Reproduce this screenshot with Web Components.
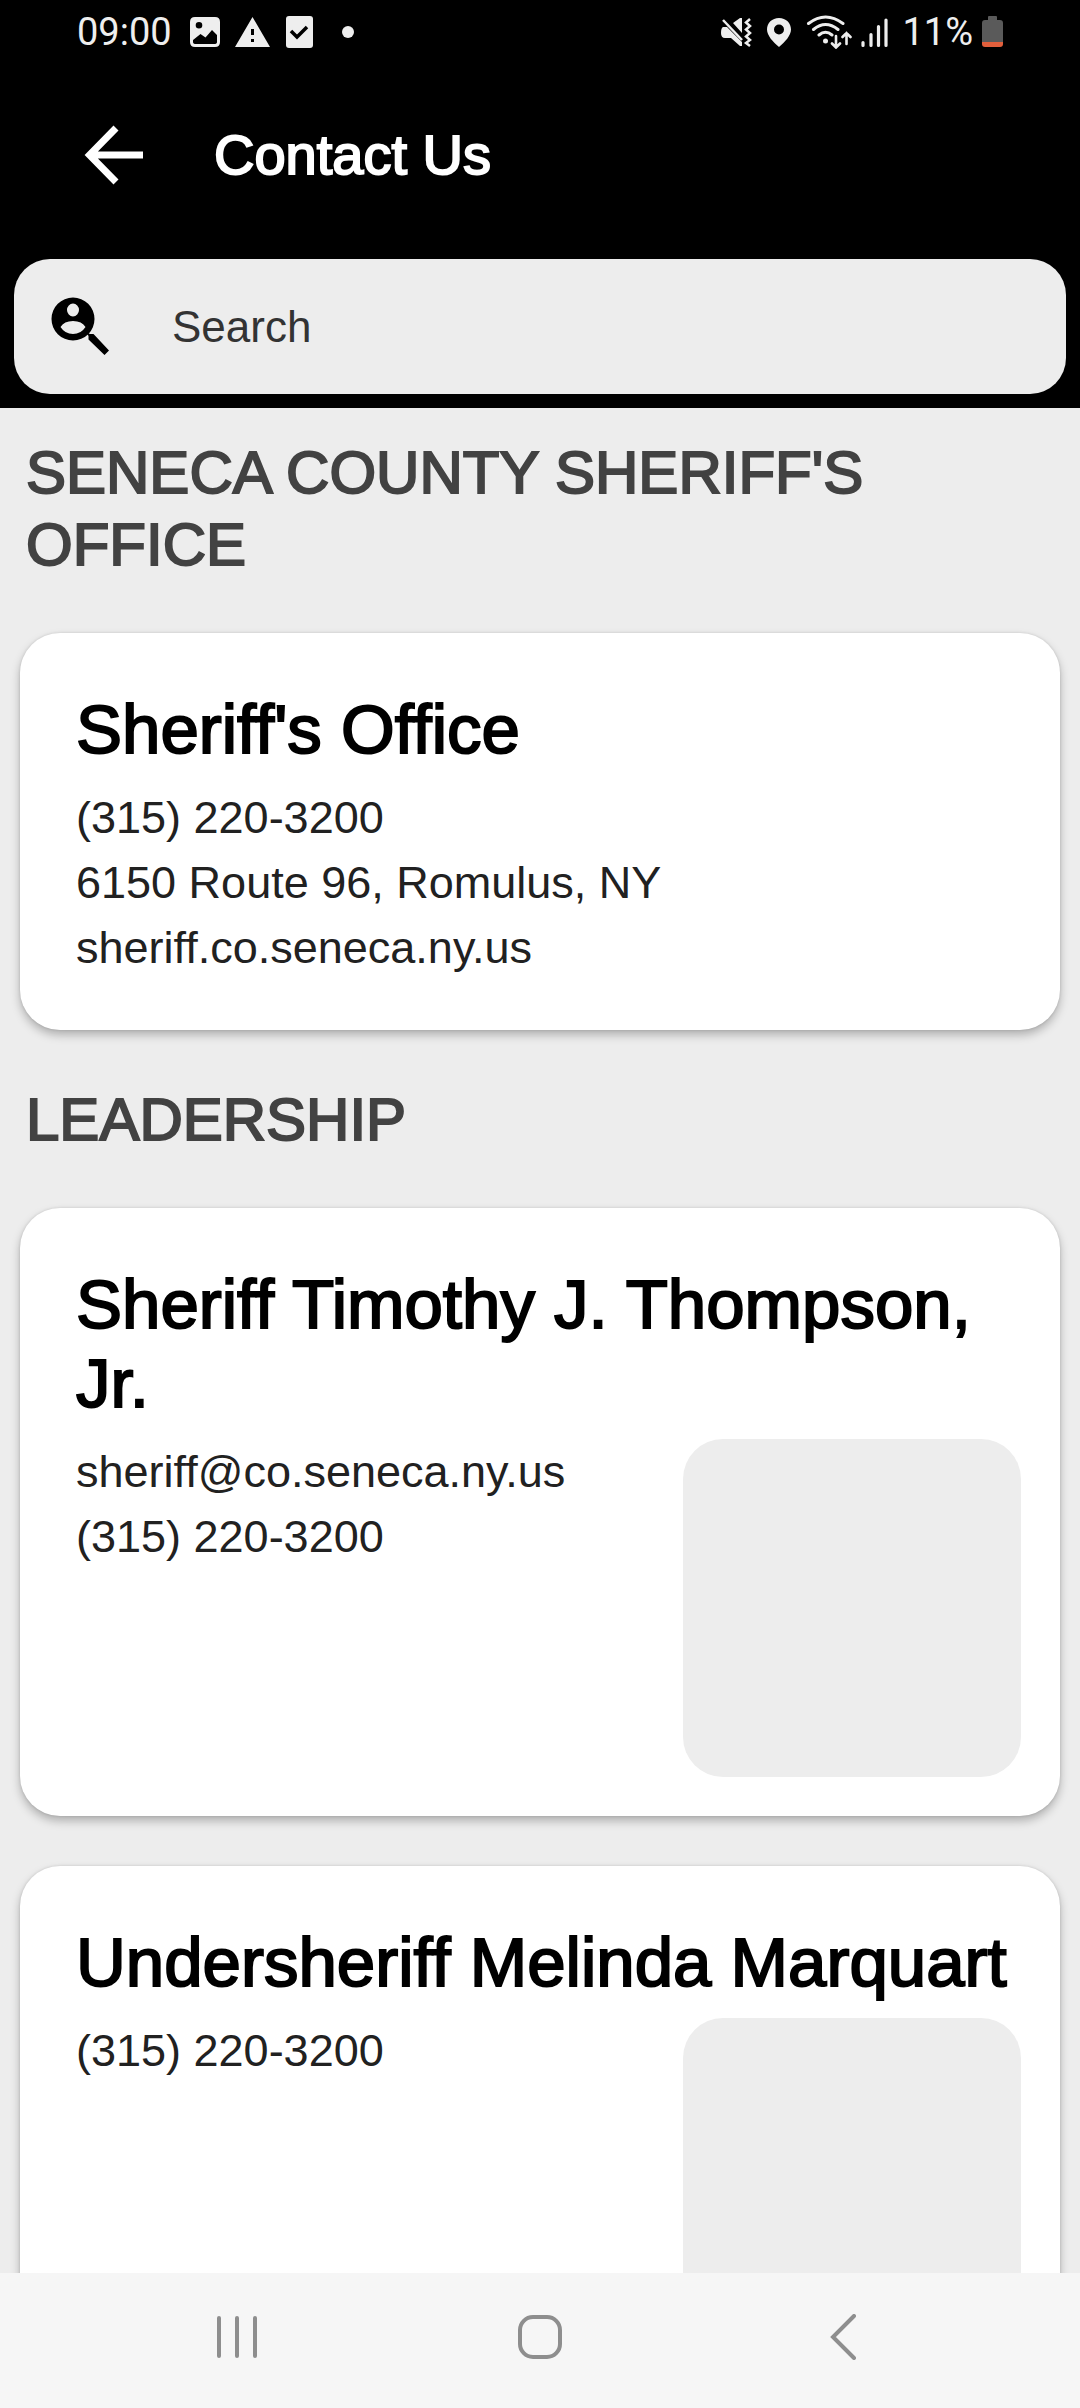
<!DOCTYPE html>
<html lang="en">
<head>
<meta charset="utf-8">
<meta name="viewport" content="width=device-width, initial-scale=1">
<title>Contact Us</title>
<style>
  body { margin: 0; background: #ededed; font-family: "Liberation Sans", Arial, sans-serif; }
</style>
</head>
<body>
<contact-app></contact-app>

<script>
  class BaseElement extends HTMLElement {
    constructor() {
      super();
      this.attachShadow({ mode: "open" }).innerHTML = this.render();
    }
    render() { return ""; }
  }

  /* System status bar: clock, notifications, radios and battery */
  customElements.define("status-bar", class extends BaseElement {
    render() {
      return `
      <style>
        :host { display: flex; justify-content: space-between; align-items: center; height: 64px;
          padding: 0 76px 0 77px; color: #eee; font: 38px Roboto, sans-serif; }
        .left, .right { display: flex; align-items: center; }
        .left { gap: 14px; }
        .right { gap: 8px; }
        svg { display: block; flex: none; fill: currentColor; }
        time { margin-right: 3px; }
      </style>
      <div class="left">
        <time>09:00</time>
        <svg width="32" height="32" viewBox="0 0 32 32"><path fill-rule="evenodd" d="M6 1H26Q31 1 31 6V26Q31 31 26 31H6Q1 31 1 26V6Q1 1 6 1ZM10 6A3.200 3.200 0 1 0 10 12.600A3.200 3.200 0 1 0 10 6ZM4 24V26Q4 28 7 28H25Q28 28 28 26V19L23 14L16.500 21.500L11.500 18Z"/></svg>
        <svg width="35" height="32" viewBox="0 0 35 32"><path fill-rule="evenodd" d="M17.500 1L35 31H0ZM16 13V19H19V13ZM16 23V26H19V23Z"/></svg>
        <svg width="31" height="34" viewBox="0 0 31 34"><rect x="2" y="1" width="27" height="32" rx="3"/><path d="M7 16L13 22L23 12" fill="none" stroke="#000" stroke-width="3.500"/></svg>
        <svg width="25" height="12" viewBox="0 0 25 12"><circle cx="19" cy="6" r="6"/></svg>
      </div>
      <div class="right">
        <svg width="38" height="32" viewBox="0 0 38 32"><path d="M3 11H7L22 26V30H20L11 22H5Q1 22 1 17Q1 12 3 11ZM13 7L20 2H22V17Z"/><path d="M3 4L22 24" stroke="#eee" stroke-width="2.500"/><path d="M30 3L26 6.500L30 10L26 13.500L30 17L26 20.500L30 24L26 27L30 30" fill="none" stroke="#eee" stroke-width="2.500"/></svg>
        <svg width="32" height="32" viewBox="0 0 32 32"><path fill-rule="evenodd" d="M13 2C6 2 1 7 1 13.500C1 19.500 7 26 13 31C19 26 25 19.500 25 13.500C25 7 20 2 13 2ZM13 8.500A5 5 0 1 1 13 18.500A5 5 0 1 1 13 8.500Z"/></svg>
        <svg width="46" height="34" viewBox="0 0 46 34"><g fill="none" stroke="#eee" stroke-width="3" stroke-linecap="round"><path d="M2.500 8.500Q19.500 -4.500 37 8.500M7.500 14.500Q19.500 4.500 32 14.500M13 20Q19.500 14.500 26 20"/><path stroke-width="2.600" d="M30 21V32M26 28.500L30 32.500L34 28.500M40.500 29V18M36.500 22L40.500 18L44.500 22"/></g><circle cx="19.500" cy="26" r="2.500"/></svg>
        <svg width="34" height="32" viewBox="0 0 34 32"><path d="M3 26.500V29.500M11 18.500V29.500M18.500 10.500V29.500M26 4V29.500" stroke="#eee" stroke-width="3.200" stroke-linecap="round"/></svg>
        <span>11%</span>
        <svg width="23" height="32" viewBox="0 0 23 32"><path fill="#5a5a5a" d="M8 0H15Q16 0 16 1V4H19Q22 4 22 7V26H1V7Q1 4 4 4H7V1Q7 0 8 0Z"/><path fill="#e25f3c" d="M1 26H22V28Q22 31 19 31H4Q1 31 1 28Z"/></svg>
      </div>`;
    }
  });

  customElements.define("app-bar", class extends BaseElement {
    render() {
      return `
      <style>
        :host { display: flex; align-items: center; gap: 68px; min-height: 182px; padding: 0 80px; color: #fff; }
        button { display: block; flex: none; padding: 0; border: 0; background: none; color: inherit; }
        svg { display: block; }
        h1 { margin: 0; font-size: 56px; line-height: 64px; font-weight: 400; -webkit-text-stroke: 2px currentColor; }
      </style>
      <button type="button" aria-label="Back">
        <svg width="66" height="60" viewBox="0 0 66 60" fill="none" stroke="currentColor" stroke-width="7"><path d="M63 30H10M36 3L9.500 30L36 57"/></svg>
      </button>
      <h1><slot></slot></h1>`;
    }
  });

  customElements.define("search-field", class extends BaseElement {
    render() {
      return `
      <style>
        :host { display: block; padding: 13px 14px 14px; }
        label { display: flex; align-items: center; gap: 61px; height: 135px; padding: 0 37px; border-radius: 36px; background: #ededed; }
        svg { flex: none; display: block; }
        input { flex: 1; min-width: 0; padding: 0; border: 0; outline: 0; background: none; font: inherit; font-size: 44px; line-height: 52px; color: #333; }
        input::placeholder { color: #333; opacity: 1; }
      </style>
      <label>
        <svg width="60" height="60" viewBox="0 0 60 60"><path fill-rule="evenodd" d="M22 .500A21.500 21.500 0 1 1 22 43.500A21.500 21.500 0 1 1 22 .500ZM22 6.500A6 6.500 0 1 0 22 19.500A6 6.500 0 1 0 22 6.500ZM9.500 30Q14 37 22 37Q30 37 34.500 30Q31 24 22 24Q13 24 9.500 30Z"/><path d="M35 35L39 37H42.500L58 53.500L53.500 58L37.500 42.500V39Z"/></svg>
        <input type="search" placeholder="Search" aria-label="Search contacts">
      </label>`;
    }
  });

  customElements.define("section-title", class extends BaseElement {
    render() {
      return `
      <style>
        :host { display: block; padding: 29px 26px 27px; color: #424242; }
        h2 { margin: 0; font-size: 60px; line-height: 72px; font-weight: 400; text-transform: uppercase; -webkit-text-stroke: 2px currentColor; }
      </style>
      <h2><slot></slot></h2>`;
    }
  });

  customElements.define("contact-card", class extends BaseElement {
    render() {
      return `
      <style>
        :host { display: block; margin: 25px 20px; padding: 57px 39px 39px 56px; border-radius: 40px; background: #fff;
          box-shadow: 0 5px 10px rgba(0,0,0,.26), 0 0 3px rgba(0,0,0,.12); }
        h3 { margin: 0 0 16px; color: #000; font-size: 69px; line-height: 79px; font-weight: 400; -webkit-text-stroke: 2px currentColor; }
        .row { display: flex; justify-content: space-between; align-items: flex-start; }
        .details { display: flex; flex-direction: column; align-items: flex-start; padding-bottom: 11px;
          color: #212121; font-size: 45px; line-height: 65px; }
        ::slotted(a) { color: inherit; text-decoration: none; }
        .photo { display: none; flex: none; width: 338px; height: 338px; border-radius: 40px; background: #ededed; }
        :host([photo]) .photo { display: block; }
      </style>
      <h3><slot name="name"></slot></h3>
      <div class="row">
        <div class="details"><slot></slot></div>
        <div class="photo"></div>
      </div>`;
    }
  });

  customElements.define("nav-bar", class extends BaseElement {
    render() {
      return `
      <style>
        :host { display: block; background: #f6f6f6; }
        nav { display: flex; height: 128px; padding: 0 86px 7px; }
        button { flex: 1; display: flex; align-items: center; justify-content: center; padding: 0; border: 0; background: none; color: #8e8e8e; }
        svg { display: block; fill: none; stroke: currentColor; stroke-width: 4; stroke-linecap: round; }
      </style>
      <nav>
        <button type="button" aria-label="Recent apps"><svg width="46" height="46" viewBox="0 0 46 46"><path d="M5 4V42M23 4V42M41 4V42"/></svg></button>
        <button type="button" aria-label="Home"><svg width="46" height="46" viewBox="0 0 46 46"><rect x="3" y="3" width="40" height="40" rx="13"/></svg></button>
        <button type="button" aria-label="Back"><svg width="46" height="46" viewBox="0 0 46 46"><path d="M34 2L13 23L34 44"/></svg></button>
      </nav>`;
    }
  });

  customElements.define("contact-app", class extends BaseElement {
    render() {
      return `
      <style>
        :host { display: flex; flex-direction: column; height: 100vh; }
        header { flex: none; background: #000; }
        main { flex: 1; min-height: 0; display: flex; flex-direction: column; overflow-y: auto; scrollbar-width: none; background: #ededed; }
        main > * { flex: none; }
        nav-bar { flex: none; }
      </style>
      <header>
        <status-bar></status-bar>
        <app-bar>Contact Us</app-bar>
        <search-field></search-field>
      </header>
      <main>
        <section-title>Seneca County Sheriff's Office</section-title>
        <contact-card>
          <span slot="name">Sheriff's Office</span>
          <a href="tel:+13152203200">(315) 220-3200</a>
          <span>6150 Route 96, Romulus, NY</span>
          <a href="#website">sheriff.co.seneca.ny.us</a>
        </contact-card>
        <section-title>Leadership</section-title>
        <contact-card photo>
          <span slot="name">Sheriff Timothy J. Thompson, Jr.</span>
          <a href="mailto:sheriff@co.seneca.ny.us">sheriff@co.seneca.ny.us</a>
          <a href="tel:+13152203200">(315) 220-3200</a>
        </contact-card>
        <contact-card photo>
          <span slot="name">Undersheriff Melinda Marquart</span>
          <a href="tel:+13152203200">(315) 220-3200</a>
        </contact-card>
      </main>
      <nav-bar></nav-bar>`;
    }
  });
</script>
</body>
</html>
